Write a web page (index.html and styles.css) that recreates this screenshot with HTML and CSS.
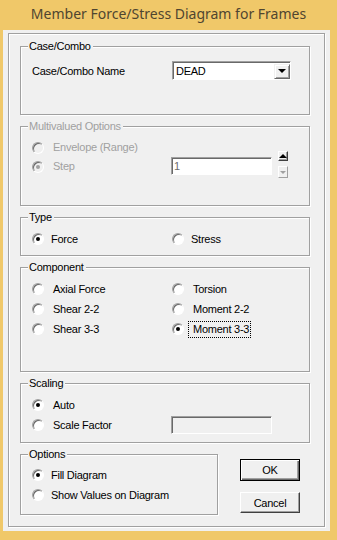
FILE: index.html
```html
<!DOCTYPE html>
<html lang="en">

<head>
    <meta charset="UTF-8" />
    <meta name="viewport" content="width=device-width, initial-scale=1.0" />
    <title>Member Force/Stress Diagram for Frames</title>
    <link rel="stylesheet" href="styles.css">
</head>

<body>
    <div class="window">
        <div class="titlebar">Member Force/Stress Diagram for Frames</div>

        <div class="client">
            <div class="frame">

                <!-- case / combo -->
                <div class="group case">
                    <span class="legend">Case/Combo</span>
                    <div class="case-row">
                        <span class="case-label">Case/Combo Name</span>
                        <div class="combo">
                            <span class="combo-text">DEAD</span>
                            <span class="combo-btn"><span class="tri-down"></span></span>
                        </div>
                    </div>
                </div>

                <!-- multivalued (disabled) -->
                <div class="group multi off">
                    <span class="legend">Multivalued Options</span>
                    <div class="multi-body">
                        <div class="multi-radios">
                            <div class="opt tight"><span class="radio"></span><span class="txt">Envelope (Range)</span></div>
                            <div class="opt tight"><span class="radio on"></span><span class="txt">Step</span></div>
                        </div>
                        <div class="edit step">1</div>
                        <div class="spin">
                            <span class="spin-btn up"><span class="tri-up"></span></span>
                            <span class="spin-btn down"><span class="tri-down"></span></span>
                        </div>
                    </div>
                </div>

                <!-- type -->
                <div class="group type">
                    <span class="legend">Type</span>
                    <div class="cols">
                        <div class="opt near"><span class="radio on"></span><span class="txt">Force</span></div>
                        <div class="opt near"><span class="radio"></span><span class="txt">Stress</span></div>
                    </div>
                </div>

                <!-- component -->
                <div class="group component">
                    <span class="legend">Component</span>
                    <div class="cols">
                        <div class="opt"><span class="radio"></span><span class="txt">Axial Force</span></div>
                        <div class="opt"><span class="radio"></span><span class="txt">Torsion</span></div>
                        <div class="opt"><span class="radio"></span><span class="txt">Shear 2-2</span></div>
                        <div class="opt"><span class="radio"></span><span class="txt">Moment 2-2</span></div>
                        <div class="opt"><span class="radio"></span><span class="txt">Shear 3-3</span></div>
                        <div class="opt"><span class="radio on"></span><span class="txt focus">Moment 3-3</span></div>
                    </div>
                </div>

                <!-- scaling -->
                <div class="group scaling">
                    <span class="legend">Scaling</span>
                    <div class="scale-grid">
                        <div class="opt"><span class="radio on"></span><span class="txt">Auto</span></div>
                        <div></div>
                        <div class="opt"><span class="radio"></span><span class="txt">Scale Factor</span></div>
                        <div class="edit disabled"></div>
                    </div>
                </div>

                <div class="bottom">
                    <!-- options -->
                    <div class="group options">
                        <span class="legend">Options</span>
                        <div class="opt near"><span class="radio on"></span><span class="txt">Fill Diagram</span></div>
                        <div class="opt near"><span class="radio"></span><span class="txt">Show Values on Diagram</span></div>
                    </div>

                    <div class="buttons">
                        <button class="btn default">OK</button>
                        <button class="btn cancel">Cancel</button>
                    </div>
                </div>

            </div>
        </div>
    </div>
</body>

</html>
```

FILE: styles.css
```css
body {
    margin: 0;
    background-color: #f0c869;
}

.window {
    width: 337px;
    height: 540px;
    background-color: #f0c869;
    font-family: "Liberation Sans", Arial, sans-serif;
    font-size: 11px;
    letter-spacing: -0.25px;
    color: #000;
}

.titlebar {
    height: 30px;
    line-height: 27px;
    text-align: center;
    font-family: "Noto Sans", sans-serif;
    font-size: 14px;
    letter-spacing: 0;
    color: #4f4530;
}

.client {
    margin: 0 7px 0 3px;
    height: 501px;
    background-color: #f0f0f0;
    overflow: hidden;
}

.frame {
    margin: 3px 5px 0 5px;
    height: 494px;
    box-sizing: border-box;
    border: 1px solid #a0a0a0;
    box-shadow: inset 1px 1px 0 #fff, 1px 1px 0 #fff;
    padding: 12px 14px 0 11px;
    display: flex;
    flex-direction: column;
    gap: 11px;
}

/* group boxes */
.group {
    position: relative;
    box-sizing: border-box;
    border: 1px solid #a0a0a0;
    box-shadow: inset 1px 1px 0 #fff, 1px 1px 0 #fff;
    padding: 11px 0 0 11px;
}

.legend {
    position: absolute;
    top: -7px;
    left: 7px;
    padding: 0 2px 0 1px;
    line-height: 13px;
    background-color: #f0f0f0;
}

.case {
    height: 69px;
    padding-top: 14px;
}

.multi {
    height: 80px;
}

.type {
    height: 39px;
}

.component {
    height: 105px;
}

.scaling {
    height: 60px;
}

.options {
    width: 198px;
    height: 61px;
    padding-top: 10px;
}

/* radios */
.opt {
    display: flex;
    align-items: center;
    height: 20px;
}

.opt.tight {
    height: 19px;
}

.radio {
    position: relative;
    flex: none;
    width: 12px;
    height: 12px;
    box-sizing: border-box;
    border-radius: 50%;
    border: 1px solid;
    border-color: #a0a0a0 #fff #fff #a0a0a0;
    box-shadow: inset 1px 1px 0 #696969;
    background-color: #fff;
}

.radio.on::after {
    content: "";
    position: absolute;
    left: 3px;
    top: 3px;
    width: 4px;
    height: 4px;
    border-radius: 50%;
    background-color: #000;
}

.opt .txt {
    margin-left: 9px;
    line-height: 13px;
}

.opt.near .txt {
    margin-left: 7px;
}

.txt.focus {
    margin-left: 5px;
    padding: 1px 1px 1px 4px;
    outline: 1px dotted #000;
}

.cols {
    display: grid;
    grid-template-columns: 140px 1fr;
}

/* disabled group */
.off {
    color: #a0a0a0;
}

.off .radio {
    background-color: #f0f0f0;
}

.off .radio.on::after {
    background-color: #a0a0a0;
}

/* case / combo */
.case-row {
    display: flex;
    align-items: center;
    height: 19px;
}

.case-label {
    width: 140px;
}

.combo {
    display: flex;
    align-items: center;
    justify-content: space-between;
    width: 119px;
    height: 19px;
    box-sizing: border-box;
    border: 1px solid;
    border-color: #a0a0a0 #fff #fff #a0a0a0;
    box-shadow: inset 1px 1px 0 #696969;
    background-color: #fff;
}

.combo-text {
    padding-left: 3px;
}

.combo-btn {
    display: flex;
    align-items: center;
    justify-content: center;
    width: 16px;
    height: 15px;
    margin: 1px 0 0 0;
    box-sizing: border-box;
    background-color: #f0f0f0;
    border: 1px solid;
    border-color: #f0f0f0 #696969 #696969 #f0f0f0;
    box-shadow: inset 1px 1px 0 #fff, inset -1px -1px 0 #a0a0a0;
}

.tri-down {
    width: 0;
    height: 0;
    border-left: 4px solid transparent;
    border-right: 4px solid transparent;
    border-top: 4px solid #000;
}

.tri-up {
    width: 0;
    height: 0;
    border-left: 4px solid transparent;
    border-right: 4px solid transparent;
    border-bottom: 4px solid #000;
}

/* edits */
.edit {
    width: 101px;
    height: 18px;
    box-sizing: border-box;
    border: 1px solid;
    border-color: #a0a0a0 #fff #fff #a0a0a0;
    box-shadow: inset 1px 1px 0 #696969;
    background-color: #fff;
    padding: 1px 0 0 2px;
    line-height: 14px;
}

.edit.step {
    margin-top: 19px;
    color: #6d6d6d;
}

.edit.disabled {
    background-color: #f0f0f0;
    align-self: center;
}

/* multivalued */
.multi-body {
    display: flex;
}

.multi-radios {
    width: 139px;
}

.spin {
    display: flex;
    flex-direction: column;
    gap: 5px;
    margin: 13px 0 0 6px;
}

.spin-btn {
    display: flex;
    align-items: center;
    justify-content: center;
    width: 10px;
    height: 10px;
    box-sizing: border-box;
    background-color: #f0f0f0;
    border: 1px solid;
    border-color: #fff #404040 #404040 #fff;
    box-shadow: inset -1px -1px 0 #a0a0a0;
}

.spin-btn.down {
    height: 12px;
    border-color: #fff #a0a0a0 #a0a0a0 #fff;
    box-shadow: none;
}

.spin .tri-up {
    border-left-width: 4px;
    border-right-width: 4px;
    border-bottom-width: 4px;
}

.spin .tri-down {
    border-left-width: 3px;
    border-right-width: 3px;
    border-top-width: 3px;
    border-top-color: #a0a0a0;
}

/* scaling */
.scale-grid {
    display: grid;
    grid-template-columns: 139px 101px;
}

/* bottom row */
.bottom {
    display: flex;
}

.buttons {
    display: flex;
    flex-direction: column;
    margin-left: 22px;
    padding-top: 5px;
}

.btn {
    width: 60px;
    height: 21px;
    padding: 0;
    font-family: "Liberation Sans", Arial, sans-serif;
    font-size: 11px;
    letter-spacing: -0.25px;
    color: #000;
    background-color: #f0f0f0;
    border: 1px solid;
    border-color: #fff #404040 #404040 #fff;
    box-shadow: inset -1px -1px 0 #a0a0a0;
    border-radius: 0;
}

.btn.default {
    height: 22px;
    border-color: #000;
    box-shadow: inset 1px 1px 0 #fff, inset -1px -1px 0 #696969, inset -2px -2px 0 #a0a0a0;
}

.btn.cancel {
    margin-top: 11px;
}
```
